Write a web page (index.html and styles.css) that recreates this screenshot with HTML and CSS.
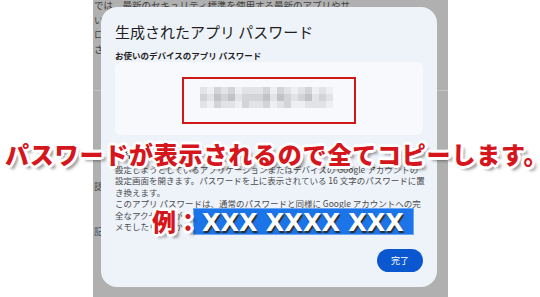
FILE: index.html
```html
<!DOCTYPE html>
<html lang="ja">
<head>
  <meta charset="UTF-8">
  <meta name="viewport" content="width=device-width, initial-scale=1.0">
  <title>アプリ パスワード</title>
  <link rel="stylesheet" href="styles.css">
</head>
<body>

  <div class="side"></div>

  <div class="page">
    <div class="page-text">
      <div class="line">では、最新のセキュリティ標準を使用する最新のアプリやサ</div>
      <div class="line">いくつかの古いアプリでは</div>
      <div class="line">ログインの際に</div>
      <div class="line">さい。</div>
      <div class="rule"></div>
      <div class="line far">認証</div>
      <div class="line mark">記録</div>
    </div>

    <div class="dialog">
      <h1 class="title">生成されたアプリ パスワード</h1>
      <div class="label">お使いのデバイスのアプリ パスワード</div>
      <div class="pw-box">
        <div class="pw-frame">
          <div class="mosaic" id="mosaic"></div>
        </div>
      </div>
      <div class="usage">
        <div class="usage-title">使用方法</div>
        <div class="line">設定しようとしているアプリケーションまたはデバイスの Google アカウントの</div>
        <div class="line">設定画面を開きます。パスワードを上に表示されている 16 文字のパスワードに置</div>
        <div class="line">き換えます。</div>
        <div class="line">このアプリ パスワードは、通常のパスワードと同様に Google アカウントへの完</div>
        <div class="line">全なアクセス権が付与されます。覚えておく必要はないので、</div>
        <div class="line">メモしたり、誰かと共有したりしないでください。</div>
      </div>
      <button class="done">完了</button>
    </div>
  </div>

  <div class="side"></div>

  <div class="note">パスワードが表示されるので全てコピーします。</div>

  <div class="example">
    <span class="example-label">例：</span>
    <span class="example-code">XXX XXXX XXX</span>
  </div>

  <script>
    // blurred password, one digit per block (0 = lightest)
    const rows = [
      '1021201112021012010',
      '2132312223132123121',
      '1021102112012001110'
    ];
    const mosaic = document.getElementById('mosaic');
    rows.forEach(row => {
      row.split('').forEach(v => {
        const cell = document.createElement('span');
        cell.className = 'px px' + v;
        mosaic.appendChild(cell);
      });
    });
  </script>

</body>
</html>
```

FILE: styles.css
```css
body {
  margin: 0;
  width: 540px;
  height: 297px;
  overflow: hidden;
  display: flex;
  position: relative;
  background: #fff;
  font-family: "Noto Sans CJK JP", "Noto Sans", sans-serif;
}

.side {
  width: 93px;
  flex: none;
}

.side:last-child {
  width: auto;
  flex: 1;
}

.page {
  position: relative;
  width: 355px;
  flex: none;
  background: #b0b0b0;
  overflow: hidden;
}

.page-text {
  margin-top: -2px;
  padding-left: 1px;
  font-size: 9.5px;
  line-height: 14.5px;
  color: #404040;
}

.page-text .line {
  white-space: nowrap;
}

.rule {
  height: 1px;
  background: #c4c4c4;
  margin-top: 34px;
}

.page-text .far {
  margin-top: 88px;
}

.page-text .mark {
  margin-top: 30px;
  color: #3a4a66;
}

.dialog {
  position: absolute;
  left: 8px;
  top: 7px;
  width: 336px;
  height: 280px;
  box-sizing: border-box;
  padding: 15px 14px;
  background: #eef2f9;
  border-radius: 16px;
  display: flex;
  flex-direction: column;
}

.title {
  margin: 0;
  font-size: 15px;
  line-height: 20px;
  font-weight: 400;
  color: #1f1f1f;
}

.label {
  margin-top: 8px;
  font-size: 8.5px;
  line-height: 10px;
  font-weight: bold;
  color: #1f1f1f;
}

.pw-box {
  margin-top: 2px;
  height: 73px;
  box-sizing: border-box;
  padding-top: 4px;
  background: #f8f9fd;
  border-radius: 6px;
  display: flex;
  align-items: center;
  justify-content: center;
}

.pw-frame {
  width: 174px;
  height: 47px;
  box-sizing: border-box;
  border: 2px solid #d01818;
  display: flex;
  align-items: center;
  justify-content: center;
}

.mosaic {
  display: grid;
  grid-template-columns: repeat(19, 7px);
  grid-auto-rows: 7px;
  margin: 0 5px 6px 0;
}

.px0 { background: #eeeff2; }
.px1 { background: #e2e3e6; }
.px2 { background: #d3d4d7; }
.px3 { background: #c2c3c6; }

.usage {
  margin-top: 13px;
  font-size: 8.5px;
  color: #4a4d4f;
}

.usage-title {
  font-size: 9.5px;
  line-height: 12px;
  margin-bottom: 4px;
  font-weight: bold;
  color: #1f1f1f;
}

.usage .line {
  line-height: 11.4px;
  white-space: nowrap;
}

.done {
  margin-top: auto;
  align-self: flex-end;
  width: 46px;
  height: 23px;
  padding: 0;
  border: none;
  border-radius: 12px;
  background: #0b57d0;
  color: #fff;
  font-family: inherit;
  font-size: 9px;
}

.note,
.example-label {
  color: #d5161c;
  font-weight: 900;
  text-shadow:
    2px 0 #fff, -2px 0 #fff, 0 2px #fff, 0 -2px #fff,
    2px 2px #fff, -2px -2px #fff, 2px -2px #fff, -2px 2px #fff,
    3px 0 #fff, 0 3px #fff, -3px 0 #fff, 0 -3px #fff,
    4px 4px 3px rgba(0, 0, 0, 0.4);
}

.note {
  position: absolute;
  left: 5px;
  top: 142px;
  font-size: 24px;
  line-height: 24px;
  letter-spacing: 0.8px;
  white-space: nowrap;
}

.example {
  position: absolute;
  left: 152px;
  top: 207px;
  display: flex;
  align-items: center;
}

.example-label {
  font-size: 24px;
  line-height: 28px;
  position: relative;
  z-index: 1;
}

.example-code {
  margin-left: -7px;
  height: 27px;
  line-height: 28px;
  padding: 0 9px 0 8px;
  box-sizing: border-box;
  background: #1b74e8;
  border: 1px solid #6aa6f2;
  color: #fff;
  font-family: "DejaVu Sans", sans-serif;
  font-weight: bold;
  font-size: 24px;
  white-space: nowrap;
  text-shadow: 1px 2px 1px #2a2a2a;
}
```
